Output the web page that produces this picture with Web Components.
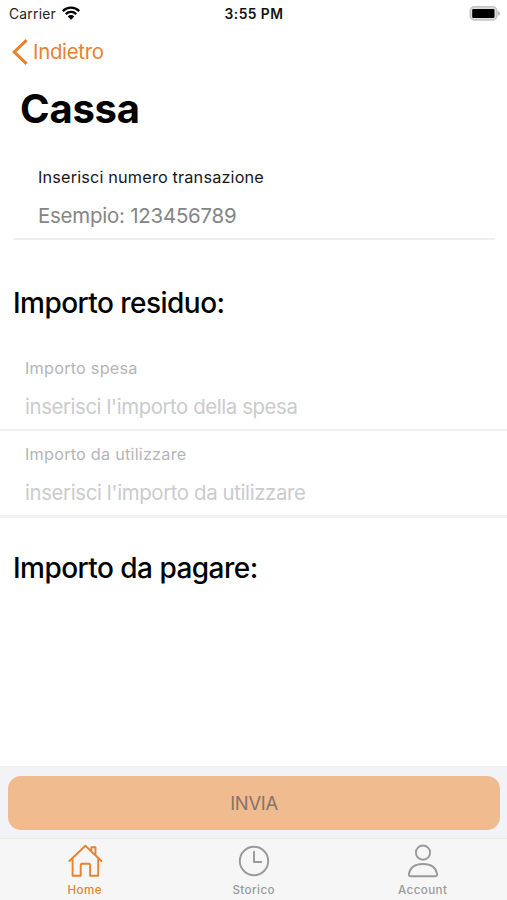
<!DOCTYPE html>
<html lang="it">
<head>
<meta charset="utf-8">
<title>Cassa</title>
<style>
  html, body { margin: 0; height: 100%; background: #fff; }
  body { font-family: Inter, "Liberation Sans", sans-serif; color: #000; overflow: hidden; }
</style>
</head>
<body>
<app-screen></app-screen>
<script>
  const define = (name, html) => {
    const template = document.createElement('template');
    template.innerHTML = html;
    customElements.define(name, class extends HTMLElement {
      constructor() {
        super();
        this.attachShadow({ mode: 'open' }).append(template.content.cloneNode(true));
      }
    });
  };

  define('status-bar', `
    <style>
      :host { display: grid; grid-template-columns: 1fr auto 1fr; align-items: center; height: 28px; padding: 0 7px 0 9px; box-sizing: border-box; line-height: 18px; }
      .left { display: flex; align-items: center; gap: 6px; font-size: 13.8px; color: #222; }
      .carrier { letter-spacing: .25px; }
      .time { font-size: 13.8px; font-weight: 600; letter-spacing: .45px; color: #111; margin-right: 1px; }
      .battery { justify-self: end; margin-top: -2px; }
      svg { display: block; margin-top: -2px; }
    </style>
    <div class="left"><span class="carrier">Carrier</span>
      <svg width="18" height="14" viewBox="0 0 18 14" fill="none" stroke="#000" stroke-width="2.3"><path d="M.8 5.1a11.6 11.6 0 0 1 16.4 0M3.8 8.1a7.4 7.4 0 0 1 10.4 0"/><path fill="#000" stroke="none" d="M5.7 10.4a4.7 4.7 0 0 1 6.6 0L9 13.8z"/></svg>
    </div>
    <span class="time">3:55 PM</span>
    <svg class="battery" width="31" height="15" viewBox="0 0 31 15"><rect x="1.200" y=".8" width="26.6" height="13.2" rx="4" fill="#ddd" stroke="#c4c4c4" stroke-width="1.4"/><rect x="3.200" y="2.9" width="22.3" height="9" rx="1.2"/><path d="M28.8 5q2.2.6 2.2 2.4t-2.2 2.4z" fill="#b5b5b5"/></svg>`);

  define('back-link', `
    <style>
      :host { display: flex; align-items: center; gap: 5px; height: 48px; padding-left: 12px; color: #e78230; font-size: 20.4px; line-height: 26px; }
      span { letter-spacing: -.3px; }
    </style>
    <svg width="16" height="26" viewBox="0 0 16 26" fill="none" stroke="currentColor" stroke-width="3.1"><path d="M14.6 1.2 2.3 13l12.3 11.8"/></svg>
    <span><slot></slot></span>`);

  define('page-title', `
    <style>
      :host { display: block; height: 82px; padding: 8px 20px 0; box-sizing: border-box; font-size: 40px; line-height: 50px; font-weight: 700; letter-spacing: -.2px; }
    </style><slot></slot>`);

  define('section-heading', `
    <style>
      :host { display: block; padding: 0 13px; font-size: 28px; line-height: 36px; font-weight: 500; letter-spacing: -.54px; }
    </style><slot></slot>`);

  define('form-field', `
    <style>
      :host { display: flex; flex-direction: column; box-sizing: border-box; height: 86px; padding: 12px 25px 0; gap: 14px; border-bottom: 2px solid #efeff0; color: #b5b5b7; }
      .label { font-size: 16.3px; line-height: 22px; letter-spacing: var(--label-spacing, .2px); }
      .hint { font-size: 20.4px; line-height: 28px; color: var(--hint, #cbcbcd); letter-spacing: var(--hint-spacing, -.38px); }
      span { white-space: nowrap; }
    </style>
    <span class="label"><slot></slot></span>
    <span class="hint"><slot name="hint"></slot></span>`);

  define('submit-bar', `
    <style>
      :host { display: block; height: 72px; padding: 9px 7px 0 8px; box-sizing: border-box; background: #f1f3f7; border-top: 1px solid #f0f0f2; }
      button { display: block; width: 100%; height: 54px; padding: 0; border: 0; border-radius: 13px; background: #f1bb90; color: #83746a; font: 400 18.4px/54px Inter, "Liberation Sans", sans-serif; letter-spacing: -.3px; }
    </style><button><slot></slot></button>`);

  define('tab-item', `
    <style>
      :host { display: flex; flex-direction: column; align-items: center; gap: 2px; padding-top: 4px; color: #999; font-size: 11.6px; line-height: 18px; font-weight: 500; }
      :host([active]) { color: #e78230; }
      span { letter-spacing: .42px; margin-left: .4px; }
    </style>
    <slot name="icon"></slot><span><slot></slot></span>`);

  define('tab-bar', `
    <style>
      :host { display: grid; grid-template-columns: repeat(3, 1fr); height: 62px; box-sizing: border-box; background: #f6f6f6; border-top: 1px solid #e9eaec; padding-right: 0; }
      svg { display: block; fill: none; stroke: currentColor; stroke-width: 1.9; stroke-linejoin: round; stroke-linecap: round; }
    </style>
    <tab-item active>
      <svg slot="icon" width="36" height="36" viewBox="0 0 36 36"><path d="M2.4 18 18.4 2.800l16 15.2M5.600 15.500v17.3h8.1v-10.500q0-1.5 1.5-1.5h6.4q1.5 0 1.5 1.5v10.500h8.1V15.500M24.300 8V4.300h4.2v8"/></svg>
      Home
    </tab-item>
    <tab-item>
      <svg slot="icon" width="36" height="36" viewBox="0 0 36 36"><circle cx="18" cy="18" r="14.2"/><path d="M18 8.8V19h7.2"/></svg>
      Storico
    </tab-item>
    <tab-item>
      <svg slot="icon" width="36" height="36" viewBox="0 0 36 36"><circle cx="18" cy="9.6" r="7.1"/><path d="M5.8 33.2h24.4c1.6 0 2.1-.9 1.9-2.2C30.9 24.300 25.500 21 18 21S5.100 24.300 3.900 31c-.2 1.300.3 2.200 1.900 2.200z"/></svg>
      Account
    </tab-item>`);

  define('app-screen', `
    <style>
      :host { display: flex; flex-direction: column; width: 507px; height: 900px; background: #fff; }
      main { flex: 1; }
      .transaction { height: 82px; margin: 0 12px 0 13px; color: #171717; --hint: #858585; --label-spacing: .15px; --hint-spacing: -.2px; padding-top: 8px; }
      .residual { margin: 45px 0 24px; }
      .spend { --hint-spacing: -.42px; }
      .use { height: 87px; border-bottom: 3px solid #f3f3f4; }
      .due { margin-top: 32px; }
    </style>
    <status-bar></status-bar>
    <back-link>Indietro</back-link>
    <page-title>Cassa</page-title>
    <main>
      <form-field class="transaction">Inserisci numero transazione<span slot="hint">Esempio: 123456789</span></form-field>
      <section-heading class="residual">Importo residuo:</section-heading>
      <form-field class="spend">Importo spesa<span slot="hint">inserisci l'importo della spesa</span></form-field>
      <form-field class="use">Importo da utilizzare<span slot="hint">inserisci l'importo da utilizzare</span></form-field>
      <section-heading class="due">Importo da pagare:</section-heading>
    </main>
    <submit-bar>INVIA</submit-bar>
    <tab-bar></tab-bar>`);
</script>
</body>
</html>
